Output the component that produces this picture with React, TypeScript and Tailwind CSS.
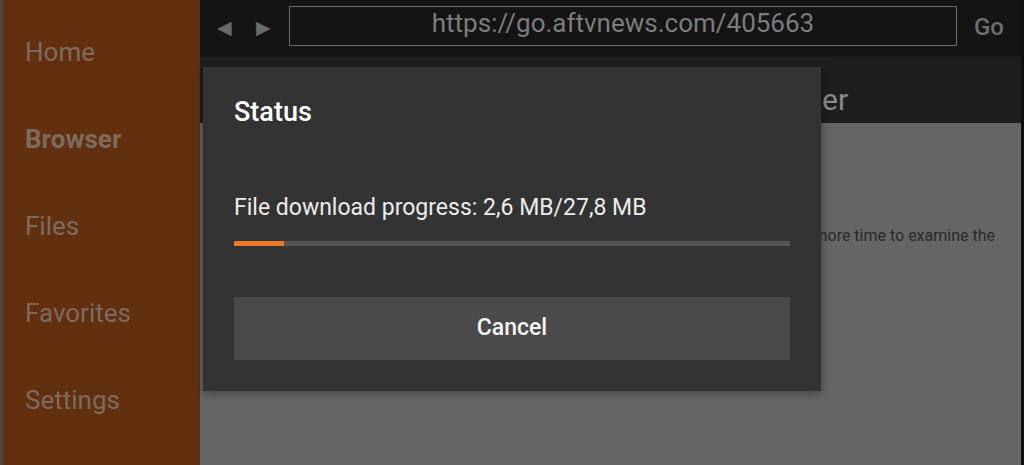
import React from "react";

export default function App() {
  const font = { fontFamily: "Roboto, 'Noto Sans', sans-serif" };
  const nav = ["Home", "Browser", "Files", "Favorites", "Settings"];
  return (
    <div className="relative w-[1024px] h-[465px] overflow-hidden flex bg-[#141414]" style={font}>
      <div className="w-[3px] h-full bg-[#4f4541]" />
      <div className="w-[197px] h-full bg-[#62300f] flex flex-col pt-[37px] pl-[22px] gap-[57px]">
        {nav.map((n) => (
          <div
            key={n}
            className={`text-[26px] leading-[30px] text-[#7d6b5f] ${n === "Browser" ? "font-bold" : ""}`}
          >
            {n}
          </div>
        ))}
      </div>
      <div className="flex-1 h-full flex flex-col">
        <div className="h-[57px] bg-[#141414] flex items-start pt-[6px]">
          <div className="h-[44px] flex items-center gap-[24px] pl-[17px] pr-[18px] text-[#6a6a6a] text-[19px]">
            <span>◀</span>
            <span>▶</span>
          </div>
          <div className="w-[668px] h-[40px] border border-[#6a6a6a] flex items-center justify-center">
            <span className="text-[26px] text-[#7c7c7c] -mt-[6px]">https://go.aftvnews.com/405663</span>
          </div>
          <div className="flex-1 h-[42px] flex items-center justify-center text-[24px] text-[#6e6e6e] font-medium">Go</div>
        </div>
        <div className="h-[66px] bg-[#1e1e1e] flex items-center pl-[622px] pt-[20px]">
          <span className="text-[30px] leading-[34px] text-[#8a8a8a]">er</span>
        </div>
        <div className="flex-1 bg-[#656565] pt-[102px] flex justify-end pr-[26px]">
          <span className="text-[16px] leading-[22px] text-[#2a2a2a] whitespace-nowrap">
            This will give you more time to examine the
          </span>
        </div>
      </div>
      <div className="w-[3px] h-full bg-[#101010]" />

      <div className="absolute left-[203px] top-[67px] w-[618px] h-[324px] bg-[#333333] shadow-[0_2px_10px_rgba(0,0,0,0.35)] px-[31px] flex flex-col">
        <div className="mt-[29px] text-[27px] leading-[32px] text-white font-medium">Status</div>
        <div className="mt-[66px] text-[23px] leading-[28px] text-[#ececec]">
          File download progress: 2,6 MB/27,8 MB
        </div>
        <div className="mt-[19px] h-[5px] w-full bg-[#555555] flex">
          <div className="h-full w-[50px] bg-[#ec7a28]" />
        </div>
        <button className="mt-[51px] h-[63px] w-full bg-[#4a4a4a] rounded-[3px] text-[23px] text-[#f4f4f4] font-medium">
          Cancel
        </button>
      </div>
    </div>
  );
}
